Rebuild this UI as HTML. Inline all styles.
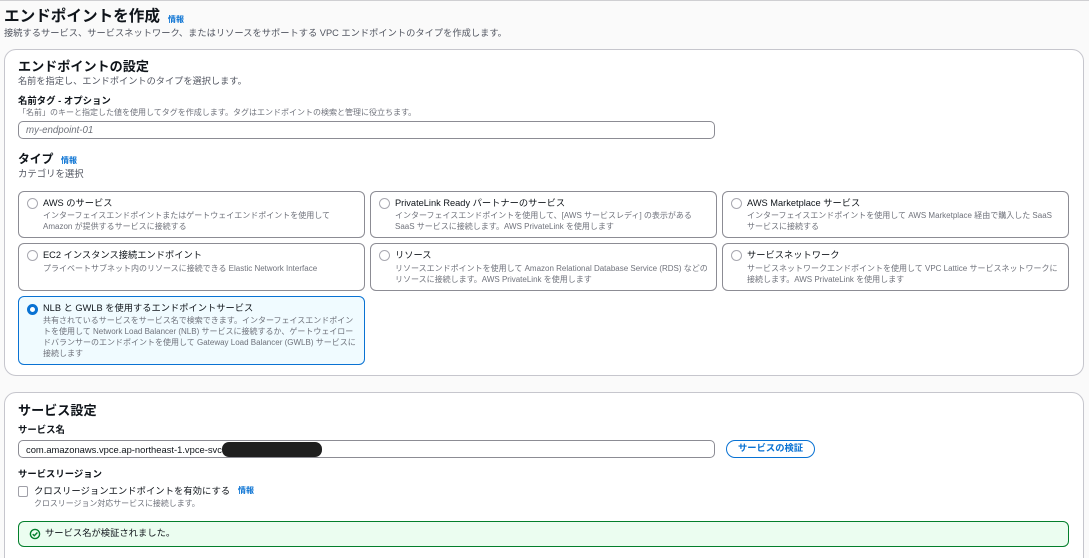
<!DOCTYPE html>
<html lang="ja">
<head>
<meta charset="utf-8">
<title>エンドポイントを作成</title>
<style>
html,body{margin:0;padding:0;background:#fafafa;width:1089px;height:558px;overflow:hidden;}
#w{position:relative;width:1089px;height:558px;overflow:hidden;background:#fafafa;font-family:"Liberation Sans","Noto Sans CJK JP",sans-serif;color:#16191f;filter:blur(.3px);}
.t{position:absolute;white-space:nowrap;line-height:1.2;}
.box{position:absolute;box-sizing:border-box;}
.panel{background:#fff;border:1px solid #c6c6cd;border-radius:12px;left:4px;width:1080px;}
.card{background:#fff;border:1px solid #8c8c94;border-radius:6px;height:47px;width:347px;}
.r{position:absolute;box-sizing:border-box;width:11px;height:11px;border:1px solid #a8a8b0;border-radius:50%;background:#fff;}
.h{font-size:9.25px;color:#0f141a;}
.d{font-size:8px;color:#6f727b;}
.i{font-size:8px;font-weight:bold;color:#0972d3;}
.b{font-weight:bold;}
.input{background:#fff;border:1px solid #8c8c94;border-radius:5px;left:18px;width:697px;height:18px;}
</style>
</head>
<body>
<div id="w">
<div class="box" style="left:0;top:0;width:1089px;height:1px;background:#cfcfd2;"></div>

<div class="t b" style="left:4px;top:8px;font-size:15.6px;color:#0f141a;">エンドポイントを作成</div>
<div class="t i" style="left:168px;top:15px;">情報</div>
<div class="t" style="left:4px;top:28px;font-size:9.25px;color:#515560;">接続するサービス、サービスネットワーク、またはリソースをサポートする VPC エンドポイントのタイプを作成します。</div>

<div class="box panel" style="top:49px;height:327px;"></div>
<div class="t b" style="left:18px;top:59px;font-size:13.1px;color:#0f141a;">エンドポイントの設定</div>
<div class="t" style="left:18px;top:76px;font-size:9.2px;color:#515560;">名前を指定し、エンドポイントのタイプを選択します。</div>
<div class="t b" style="left:18px;top:95px;font-size:9.4px;color:#0f141a;">名前タグ - オプション</div>
<div class="t" style="left:18px;top:108px;font-size:8px;color:#6f727b;">「名前」のキーと指定した値を使用してタグを作成します。タグはエンドポイントの検索と管理に役立ちます。</div>
<div class="box input" style="top:121px;"></div>
<div class="t" style="left:26px;top:125px;font-size:9.7px;font-style:italic;color:#6f727b;">my-endpoint-01</div>

<div class="t b" style="left:18px;top:152px;font-size:11.8px;color:#0f141a;">タイプ</div>
<div class="t i" style="left:61px;top:156px;">情報</div>
<div class="t" style="left:18px;top:168px;font-size:9.4px;color:#515560;">カテゴリを選択</div>

<!-- Row 1 -->
<div class="box card" style="left:18px;top:191px;"></div>
<div class="r" style="left:27px;top:198px;"></div>
<div class="t h" style="left:43px;top:198px;">AWS のサービス</div>
<div class="t d" style="left:43px;top:211px;">インターフェイスエンドポイントまたはゲートウェイエンドポイントを使用して</div>
<div class="t d" style="left:43px;top:222px;">Amazon が提供するサービスに接続する</div>

<div class="box card" style="left:370px;top:191px;"></div>
<div class="r" style="left:379px;top:198px;"></div>
<div class="t h" style="left:395px;top:198px;">PrivateLink Ready パートナーのサービス</div>
<div class="t d" style="left:395px;top:211px;">インターフェイスエンドポイントを使用して、[AWS サービスレディ] の表示がある</div>
<div class="t d" style="left:395px;top:222px;">SaaS サービスに接続します。AWS PrivateLink を使用します</div>

<div class="box card" style="left:722px;top:191px;"></div>
<div class="r" style="left:731px;top:198px;"></div>
<div class="t h" style="left:747px;top:198px;">AWS Marketplace サービス</div>
<div class="t d" style="left:747px;top:211px;">インターフェイスエンドポイントを使用して AWS Marketplace 経由で購入した SaaS</div>
<div class="t d" style="left:747px;top:222px;">サービスに接続する</div>

<!-- Row 2 -->
<div class="box card" style="left:18px;top:243px;height:48px;"></div>
<div class="r" style="left:27px;top:250px;"></div>
<div class="t h" style="left:43px;top:250px;">EC2 インスタンス接続エンドポイント</div>
<div class="t d" style="left:43px;top:264px;">プライベートサブネット内のリソースに接続できる Elastic Network Interface</div>

<div class="box card" style="left:370px;top:243px;height:48px;"></div>
<div class="r" style="left:379px;top:250px;"></div>
<div class="t h" style="left:395px;top:250px;">リソース</div>
<div class="t d" style="left:395px;top:264px;">リソースエンドポイントを使用して Amazon Relational Database Service (RDS) などの</div>
<div class="t d" style="left:395px;top:275px;">リソースに接続します。AWS PrivateLink を使用します</div>

<div class="box card" style="left:722px;top:243px;height:48px;"></div>
<div class="r" style="left:731px;top:250px;"></div>
<div class="t h" style="left:747px;top:250px;">サービスネットワーク</div>
<div class="t d" style="left:747px;top:264px;">サービスネットワークエンドポイントを使用して VPC Lattice サービスネットワークに</div>
<div class="t d" style="left:747px;top:275px;">接続します。AWS PrivateLink を使用します</div>

<!-- Row 3 -->
<div class="box" style="left:18px;top:296px;width:347px;height:69px;background:#f0fbff;border:1.5px solid #0972d3;border-radius:6px;"></div>
<div class="r" style="left:27px;top:304px;border:3px solid #0972d3;"></div>
<div class="t h" style="left:43px;top:303px;">NLB と GWLB を使用するエンドポイントサービス</div>
<div class="t d" style="left:43px;top:316px;">共有されているサービスをサービス名で検索できます。インターフェイスエンドポイン</div>
<div class="t d" style="left:43px;top:327px;">トを使用して Network Load Balancer (NLB) サービスに接続するか、ゲートウェイロー</div>
<div class="t d" style="left:43px;top:338px;">ドバランサーのエンドポイントを使用して Gateway Load Balancer (GWLB) サービスに</div>
<div class="t d" style="left:43px;top:349px;">接続します</div>

<!-- Panel 2 -->
<div class="box panel" style="top:392px;height:180px;"></div>
<div class="t b" style="left:18px;top:403px;font-size:13.1px;color:#0f141a;">サービス設定</div>
<div class="t b" style="left:18px;top:424px;font-size:9.4px;color:#0f141a;">サービス名</div>
<div class="box input" style="top:440px;"></div>
<div class="t" style="left:26px;top:444px;font-size:9.4px;color:#0f141a;">com.amazonaws.vpce.ap-northeast-1.vpce-svc</div>
<div class="box" style="left:222px;top:442px;width:100px;height:15px;background:#1f1f1f;border-radius:7px;"></div>
<div class="box" style="left:726px;top:440px;width:89px;height:18px;border:1px solid #0972d3;border-radius:9px;background:#fff;"></div>
<div class="t b" style="left:738px;top:443px;font-size:9.3px;color:#0972d3;">サービスの検証</div>

<div class="t b" style="left:18px;top:469px;font-size:9.35px;color:#0f141a;">サービスリージョン</div>
<div class="box" style="left:18px;top:486px;width:10px;height:11px;border:1px solid #a0a0a8;border-radius:2px;background:#fff;"></div>
<div class="t" style="left:34px;top:486px;font-size:9.35px;color:#0f141a;">クロスリージョンエンドポイントを有効にする</div>
<div class="t i" style="left:238px;top:486px;">情報</div>
<div class="t" style="left:34px;top:499px;font-size:7.95px;color:#6f727b;">クロスリージョン対応サービスに接続します。</div>

<div class="box" style="left:18px;top:521px;width:1051px;height:26px;background:#ebfdf0;border:1px solid #037f2c;border-radius:6px;"></div>
<svg style="position:absolute;left:29px;top:528px;" width="12" height="12" viewBox="0 0 12 12" fill="none" stroke="#037f2c" stroke-width="1.4"><circle cx="6" cy="6" r="4.6"/><path d="M3.7 6.1 5.3 7.7 8.4 4.5"/></svg>
<div class="t" style="left:45px;top:528px;font-size:9.3px;color:#0f141a;">サービス名が検証されました。</div>
</div>
</body>
</html>
